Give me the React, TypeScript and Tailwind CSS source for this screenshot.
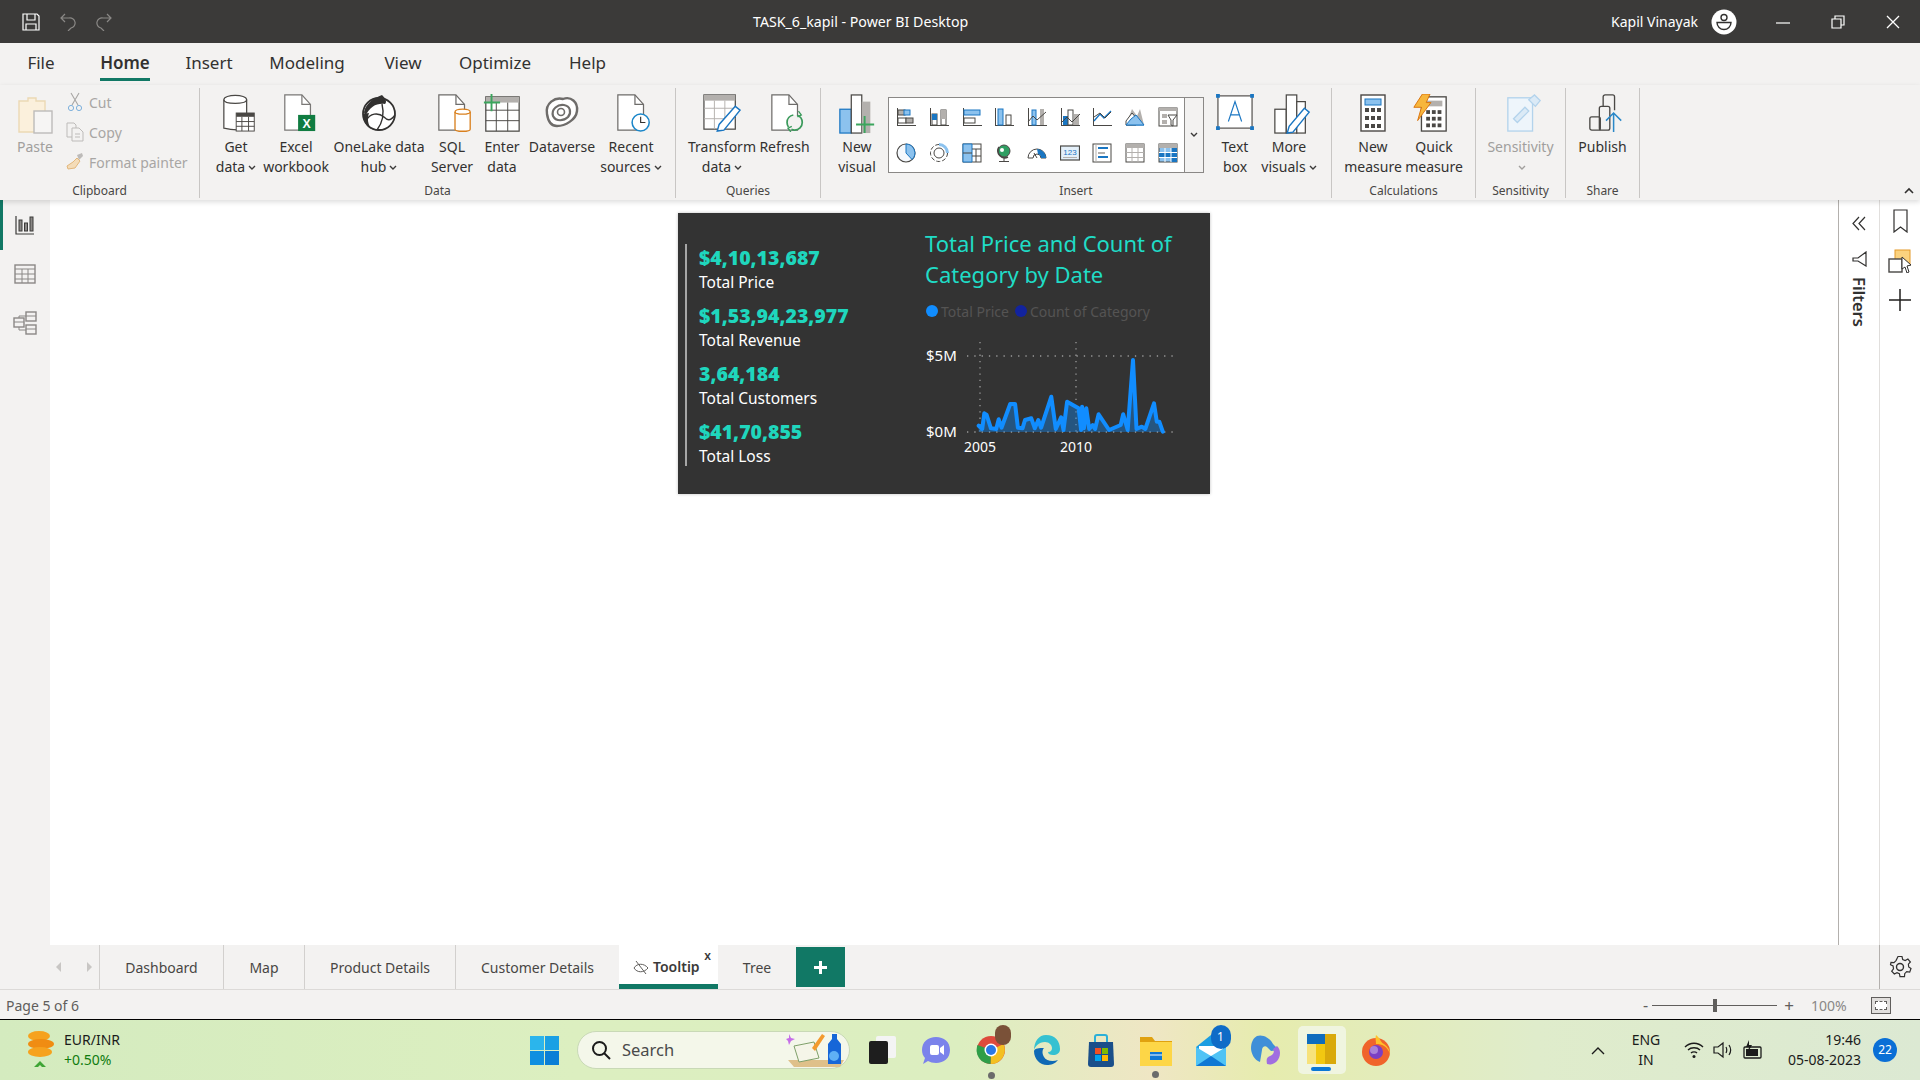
import type { ReactNode } from 'react'

const DK = '#4a4845'
const BL = '#1a76c2'
const LB = '#8cc2ee'
const GR = '#b3b0ad'

function Ico({ w = 20, h = 20, vb, children }: { w?: number; h?: number; vb?: string; children: ReactNode }) {
  return (
    <svg width={w} height={h} viewBox={vb ?? `0 0 ${w} ${h}`} fill="none" className="block shrink-0">
      {children}
    </svg>
  )
}

const gallery: ReactNode[] = [
  <>
    <path d="M1.5 1v17M1 18.5h19" stroke={DK} /><rect x="2" y="3" width="7" height="5" fill={GR} stroke={DK} /><rect x="8" y="3" width="6" height="5" fill={LB} stroke={BL} /><rect x="2" y="11" width="8" height="5" fill="#fff" stroke={DK} /><rect x="10" y="11" width="7" height="5" fill={GR} stroke={DK} />
  </>,
  <>
    <path d="M1.5 1v17M1 18.5h19" stroke={DK} /><rect x="3" y="7" width="5" height="11" fill="#fff" stroke={DK} /><rect x="3" y="7" width="5" height="6" fill={BL} /><rect x="12" y="3" width="5" height="15" fill="#fff" stroke={DK} /><rect x="12" y="3" width="5" height="9" fill={GR} />
  </>,
  <>
    <path d="M1.5 1v18M1 18.5h19" stroke={DK} /><rect x="2" y="3" width="16" height="5" fill={LB} stroke={BL} /><rect x="2" y="11" width="11" height="5" fill="#fff" stroke={DK} />
  </>,
  <>
    <path d="M1.5 1v18M1 18.5h19" stroke={DK} /><rect x="4" y="2" width="5" height="16" fill={LB} stroke={BL} /><rect x="12" y="8" width="5" height="10" fill="#fff" stroke={DK} />
  </>,
  <>
    <path d="M1.5 1v18M1 18.5h19" stroke={DK} /><rect x="5" y="3" width="4" height="15" fill={LB} stroke={BL} /><rect x="13" y="2" width="4" height="16" fill={GR} /><path d="M1 15l5-6 4 4 9-8" stroke={DK} />
  </>,
  <>
    <path d="M1.5 1v18M1 18.5h19" stroke={DK} /><rect x="3" y="9" width="5" height="9" fill={BL} /><rect x="8" y="3" width="5" height="15" fill="#fff" stroke={DK} /><rect x="14" y="7" width="5" height="11" fill={GR} /><path d="M1 16l6-6 5 5 8-8" stroke={DK} />
  </>,
  <>
    <path d="M1.5 1v18M1 18.5h19" stroke={DK} /><path d="M2 14l6-7 4 4 7-7" stroke={BL} strokeWidth="1.4" /><path d="M2 10l6-4 5 5 6-6" stroke={DK} />
  </>,
  <>
    <path d="M1 18h18" stroke={BL} /><path d="M7 2l5 7 3-7 4 16H1z" fill={GR} /><path d="M1 14l6-8 6 7-2 5H1z" fill="#fff" stroke={DK} /><path d="M1 18l5-6 5-4 8 10z" fill={LB} stroke={BL} />
  </>,
  <>
    <rect x="1" y="1" width="18" height="18" fill="#fff" stroke={DK} /><rect x="1" y="1" width="18" height="3" fill={GR} /><rect x="4" y="7" width="5" height="4" fill={GR} /><rect x="4" y="13" width="5" height="4" fill={GR} /><path d="M10 8h9l-4 5v6l-2-1v-5z" fill="#fff" stroke={DK} />
  </>,
  <>
    <circle cx="10" cy="10" r="9" fill="#f5f9fd" stroke={DK} strokeWidth="1.2" /><path d="M10 1a9 9 0 0 1 6 15.5L10 10z" fill={LB} stroke={BL} />
  </>,
  <>
    <circle cx="10" cy="10" r="8.5" stroke={DK} strokeDasharray="4 2" /><circle cx="10" cy="10" r="5" fill="#fff" stroke={DK} /><path d="M10 1.5a8.5 8.5 0 0 1 8.5 8.5" stroke={LB} strokeWidth="3" />
  </>,
  <>
    <rect x="1" y="1" width="18" height="18" fill="#fff" stroke={DK} /><path d="M1 1h9v18H1z" fill={LB} stroke={BL} /><path d="M1 10h9M10 6h9M14 6v13M10 13h9" stroke={DK} />
  </>,
  <>
    <circle cx="10" cy="8" r="6" fill="#2f9e62" stroke={DK} /><path d="M5 4a7 7 0 0 0 9 10" stroke={DK} strokeWidth="1.6" /><path d="M10 15v3M5 18.5h10" stroke={DK} /><circle cx="8" cy="7" r="2" fill="#fff" />
  </>,
  <>
    <path d="M1 15a9 9 0 0 1 18 0h-5a4 4 0 0 0-8 0z" fill="#fff" stroke={DK} /><path d="M10 6a9 9 0 0 1 9 9h-5a4 4 0 0 0-3-4z" fill={BL} /><path d="M7 10l3 5" stroke={DK} />
  </>,
  <>
    <rect x="0.5" y="3" width="19" height="14" fill="#e4f0fa" stroke={DK} strokeWidth="1.2" /><path d="M3 14.5h14" stroke={GR} /><text x="10" y="12" textAnchor="middle" fontSize="8" fill={BL} fontFamily="Liberation Sans, sans-serif">123</text>
  </>,
  <>
    <rect x="1" y="1" width="18" height="18" fill="#fff" stroke={DK} /><path d="M4 1v18" stroke={GR} /><rect x="6" y="4" width="10" height="2" fill={BL} /><rect x="6" y="9" width="7" height="2" fill={GR} /><rect x="6" y="13" width="10" height="2" fill={BL} />
  </>,
  <>
    <rect x="1" y="1" width="18" height="18" fill="#fff" stroke={DK} /><rect x="1" y="1" width="18" height="4" fill={GR} /><path d="M1 9.5h18M1 14.5h18M7 5v14M13 5v14" stroke={GR} />
  </>,
  <>
    <rect x="1" y="1" width="18" height="18" fill={LB} stroke={DK} /><rect x="1" y="1" width="18" height="4" fill={GR} /><rect x="13" y="5" width="6" height="14" fill={BL} /><rect x="1" y="10" width="18" height="4" fill={BL} /><path d="M1 9.5h18M1 14.5h18M7 5v14M13 5v14" stroke="#fff" />
  </>,
]

const chartPts: [number, number][] = [
  [880, 662], [890, 672], [896, 625], [903, 630], [915, 670], [930, 672], [937, 643], [945, 668], [970, 597], [984, 597], [992, 668], [1005, 670], [1012, 645], [1030, 640], [1040, 670], [1050, 645], [1058, 668], [1087, 575], [1100, 672], [1115, 637], [1122, 675], [1132, 590], [1165, 610], [1172, 675], [1175, 605], [1180, 670], [1187, 610], [1195, 672], [1205, 660], [1212, 672], [1222, 628], [1252, 675], [1285, 660], [1292, 628], [1305, 675], [1320, 465], [1330, 672], [1345, 665], [1355, 672], [1380, 595], [1388, 650], [1395, 650], [1405, 680],
]
// zoom coords of the crop to svg coords (svg sits at 925,335 on the page)
const toX = (z: number) => 670 + z / 2.851 - 925
const toY = (z: number) => 205 + z / 3 - 335
const line = chartPts.map(([x, y]) => `${toX(x).toFixed(1)},${toY(y).toFixed(1)}`).join(' ')

function Chevron({ color = '#3b3a39' }: { color?: string }) {
  return (
    <svg width="8" height="6" viewBox="0 0 8 6" fill="none" className="inline-block ml-[3px] mb-[1px]">
      <path d="M1 1l3 3 3-3" stroke={color} strokeWidth="1.4" />
    </svg>
  )
}

function Item({ w, icon, top, bottom, more, muted, shift }: { w: string; icon: ReactNode; top: string; bottom?: string; more?: boolean; muted?: boolean; shift?: string }) {
  return (
    <div className={`${w} flex flex-col items-center shrink-0`}>
      <div className={`h-[49px] pt-[6px] flex items-start justify-center ${shift ?? ''}`}>{icon}</div>
      <div className={`h-[20px] leading-[20px] whitespace-nowrap ${muted ? 'text-[#a19f9d]' : ''}`}>{top}</div>
      <div className="h-[20px] leading-[20px] whitespace-nowrap">
        {bottom}
        {more && <Chevron color={muted ? '#a19f9d' : '#3b3a39'} />}
      </div>
    </div>
  )
}

function Group({ w, label, pl, children }: { w: string; label: string; pl?: string; children: ReactNode }) {
  return (
    <div className={`${w} shrink-0 h-[110px] border-r border-[#c8c6c4] flex flex-col`}>
      <div className={`h-[95px] shrink-0 flex ${pl ?? ''}`}>{children}</div>
      <div className="text-center text-[12px] leading-[15px] text-[#484644]">{label}</div>
    </div>
  )
}

function Tray({ children }: { children: ReactNode }) {
  return <div className="w-[55px] flex justify-center items-center">{children}</div>
}

const menus = [
  { label: 'File', w: 'w-[82px]' },
  { label: 'Home', w: 'w-[86px]', active: true },
  { label: 'Insert', w: 'w-[82px]' },
  { label: 'Modeling', w: 'w-[114px]' },
  { label: 'View', w: 'w-[78px]' },
  { label: 'Optimize', w: 'w-[106px]' },
  { label: 'Help', w: 'w-[79px]' },
]

const tabs = [
  { label: 'Dashboard', w: 'w-[124px]' },
  { label: 'Map', w: 'w-[81px]' },
  { label: 'Product Details', w: 'w-[151px]' },
  { label: 'Customer Details', w: 'w-[164px]' },
]

const kpis = [
  { value: '$4,10,13,687', label: 'Total Price' },
  { value: '$1,53,94,23,977', label: 'Total Revenue' },
  { value: '3,64,184', label: 'Total Customers' },
  { value: '$41,70,855', label: 'Total Loss' },
]

export default function App() {
  return (
    <div className="w-[1920px] h-[1080px] overflow-hidden flex flex-col bg-[#f3f2f1] text-[#323130] text-[14px] font-['Noto_Sans',sans-serif]">
      {/* title bar */}
      <div className="h-[43px] shrink-0 bg-[#3b3a39] flex items-center text-white">
        <div className="w-[753px] shrink-0 flex items-center pl-[22px] gap-[20px]">
          <Ico w={18} h={18}>
            <path d="M1 1h14l2 2v14H1zM5 1v6h8V1M4 17v-6h10v6" stroke="#fff" strokeWidth="1.2" />
          </Ico>
          <Ico w={16} h={18}>
            <path d="M5 1L1 5l4 4M1 5h8a5 5 0 0 1 2 10l-3 3" stroke="#8a8886" strokeWidth="1.2" />
          </Ico>
          <Ico w={16} h={18}>
            <path d="M11 1l4 4-4 4M15 5H7a5 5 0 0 0-2 10l3 3" stroke="#8a8886" strokeWidth="1.2" />
          </Ico>
        </div>
        <div className="text-[14.2px] whitespace-nowrap">TASK_6_kapil - Power BI Desktop</div>
        <div className="ml-auto flex items-center">
          <span className="text-[14px] whitespace-nowrap">Kapil Vinayak</span>
          <div className="ml-[13px] w-[26px] h-[26px]">
            <Ico w={26} h={26}>
              <circle cx="13" cy="13" r="12.5" fill="#fff" />
              <circle cx="13" cy="8.500" r="3" stroke="#323130" strokeWidth="1.4" />
              <path d="M6 13.500h14a7 7 0 0 1-14 0z" stroke="#323130" strokeWidth="1.4" />
            </Ico>
          </div>
          <div className="w-[55px] ml-[18px] flex justify-center">
            <Ico w={14} h={14}><path d="M0 8h14" stroke="#fff" strokeWidth="1.2" /></Ico>
          </div>
          <div className="w-[55px] flex justify-center">
            <Ico w={14} h={14}><path d="M1 4h9v9H1zM4 4V1h9v9h-3" stroke="#fff" strokeWidth="1.2" /></Ico>
          </div>
          <div className="w-[55px] flex justify-center">
            <Ico w={14} h={14}><path d="M1 1l12 12M13 1L1 13" stroke="#fff" strokeWidth="1.3" /></Ico>
          </div>
        </div>
      </div>

      {/* menu tabs */}
      <div className="h-[42px] shrink-0 flex text-[17px]">
        {menus.map((m) => (
          <div key={m.label} className={`${m.w} flex justify-center pt-[8px]`}>
            <span className={`h-[30px] leading-[24px] ${m.active ? 'font-semibold border-b-[3px] border-[#117865]' : ''}`}>{m.label}</span>
          </div>
        ))}
      </div>

      {/* ribbon */}
      <div className="h-[115px] shrink-0 relative z-10 pt-[3px] flex shadow-[0_2px_5px_rgba(0,0,0,0.14)]">
        <Group w="w-[200px]" label="Clipboard">
          <div className="w-[66px] pl-[4px] flex flex-col items-center">
            <div className="pt-[8px] h-[49px]">
              <Ico w={36} h={38}>
                <path d="M2 5h9V2h8v3h9v31H2z" fill="#fbf0dc" stroke="#ecd9b4" strokeWidth="1.4" />
                <rect x="17" y="15" width="18" height="22" fill="#f6f5f4" stroke="#bdbbb9" strokeWidth="1.4" />
              </Ico>
            </div>
            <div className="leading-[20px] text-[#a19f9d]">Paste</div>
          </div>
          <div className="pt-[4px] flex flex-col text-[#a8a6a4] h-[90px] gap-[10px]">
            <div className="flex items-center gap-[5px] h-[20px]">
              <Ico w={18} h={20}>
                <path d="M5 1l7 12M13 1L6 13" stroke="#a8a6a4" strokeWidth="1.1" />
                <circle cx="5" cy="16" r="2.6" stroke="#7eb1dc" /><circle cx="13" cy="16" r="2.6" stroke="#7eb1dc" />
              </Ico>
              Cut
            </div>
            <div className="flex items-center gap-[5px] h-[20px]">
              <Ico w={18} h={20}>
                <path d="M1 1h7l2 2v3M1 1v14h5" stroke="#bdbbb9" /><path d="M6 6h7l4 4v9H6z" stroke="#bdbbb9" /><path d="M9 12h5M9 15h5" stroke="#bdbbb9" />
              </Ico>
              Copy
            </div>
            <div className="flex items-center gap-[5px] h-[20px] whitespace-nowrap">
              <Ico w={18} h={20}>
                <path d="M11 3l5-2 1 3-4 4z" fill="#bdbbb9" /><path d="M11 6l3 3-5 7-7 1-1-3 6-4z" fill="#f4dcb8" stroke="#e2b77c" />
              </Ico>
              Format painter
            </div>
          </div>
        </Group>

        <Group w="w-[476px]" label="Data" pl="pl-[4px]">
          <Item w="w-[64px]" top="Get" bottom="data" more shift="ml-[7px]" icon={
            <Ico w={36} h={38} vb="0 0 36 40">
              <path d="M1 6c0-6 24-6 24 0v29c0 3-12 4-24 1z" fill="#fff" stroke={DK} strokeWidth="1.3" />
              <path d="M1 6c0 5 24 5 24 0" stroke={DK} strokeWidth="1.3" />
              <rect x="14" y="20" width="19" height="19" fill="#fff" stroke={DK} /><rect x="14" y="20" width="19" height="4" fill={DK} /><path d="M14 29h19M14 34h19M20 24v15M27 24v15" stroke={DK} />
            </Ico>} />
          <Item w="w-[56px]" top="Excel" bottom="workbook" shift="ml-[8px]" icon={
            <Ico w={34} h={38} vb="0 0 34 40">
              <path d="M1 1h18l9 10v27H1z" fill="#fff" stroke="#7a7876" strokeWidth="1.3" /><path d="M19 1v10h9" stroke="#7a7876" strokeWidth="1.3" />
              <rect x="15" y="22" width="18" height="17" fill="#107c41" />
              <text x="24" y="36" textAnchor="middle" fontSize="13" fontWeight="700" fill="#fff" fontFamily="Liberation Sans, sans-serif">X</text>
            </Ico>} />
          <Item w="w-[110px]" top="OneLake data" bottom="hub" more icon={
            <Ico w={36} h={38}>
              <circle cx="18" cy="20" r="16" fill="#fff" stroke="#323130" strokeWidth="1.8" />
              <path d="M3 18C5 9 13 4 21 1c4 4 5 7 3 9-8-1-15 2-20 13z" fill="#323130" />
              <path d="M5 27c4-8 12-9 18-4 3 3 6 5 11-2M21 10c2 8 1 18-5 26" stroke="#323130" strokeWidth="1.4" />
              <path d="M2 20c0 7 4 13 8 15-3-5-4-10-2-16z" fill="#323130" />
            </Ico>} />
          <Item w="w-[36px]" top="SQL" bottom="Server" shift="ml-[6px]" icon={
            <Ico w={36} h={38} vb="0 0 36 40">
              <path d="M1 1h18l9 10v27H1z" fill="#fff" stroke="#6e6c6a" strokeWidth="1.3" /><path d="M19 1v10h9" stroke="#6e6c6a" strokeWidth="1.3" />
              <path d="M18 19c0-4 16-4 16 0v18c0 3-16 3-16 0z" fill="#fff" stroke="#d9801f" strokeWidth="1.4" /><path d="M18 19c0 3 16 3 16 0" stroke="#d9801f" strokeWidth="1.4" />
            </Ico>} />
          <Item w="w-[64px]" top="Enter" bottom="data" icon={
            <Ico w={38} h={40} vb="0 0 38 42">
              <rect x="2" y="3" width="35" height="36" fill="#fff" stroke={DK} strokeWidth="1.3" /><rect x="2" y="3" width="35" height="6" fill={GR} />
              <path d="M2 17h35M2 28h35M13 9v30M25 9v30" stroke={DK} />
              <path d="M8 0v18M0 9h17" stroke="#3ba55d" strokeWidth="2" />
            </Ico>} />
          <Item w="w-[56px]" top="Dataverse" icon={
            <Ico w={36} h={36}>
              <path d="M3 20C1 9 11 3 19 5c8-3 15 3 14 12-1 9-12 15-20 15C7 32 4 27 3 20z" fill="#fff" stroke="#6e6c6a" strokeWidth="2.4" />
              <path d="M9 22c-2-7 5-12 11-11 6 1 8 7 4 12-4 4-12 5-15-1z" stroke="#6e6c6a" strokeWidth="2.2" />
              <circle cx="17" cy="18" r="3.5" stroke="#6e6c6a" strokeWidth="1.6" />
            </Ico>} />
          <Item w="w-[82px]" top="Recent" bottom="sources" more shift="ml-[6px]" icon={
            <Ico w={36} h={38} vb="0 0 36 40">
              <path d="M1 1h18l9 10v27H1z" fill="#fff" stroke="#6e6c6a" strokeWidth="1.3" /><path d="M19 1v10h9" stroke="#6e6c6a" strokeWidth="1.3" />
              <circle cx="25" cy="30" r="9" fill="#fff" stroke="#1a86c9" strokeWidth="1.6" /><path d="M25 24v6h5" stroke="#323130" strokeWidth="1.2" />
            </Ico>} />
        </Group>

        <Group w="w-[145px]" label="Queries" pl="pl-[16px]">
          <Item w="w-[60px]" top="Transform" bottom="data" more icon={
            <Ico w={40} h={38} vb="0 0 40 40">
              <rect x="1" y="1" width="33" height="36" fill="#fff" stroke={DK} strokeWidth="1.3" /><rect x="1" y="1" width="33" height="6" fill={GR} />
              <path d="M1 15h33M1 26h33M12 7v30M23 7v30" stroke={GR} />
              <path d="M34 13l5 4-17 21-7 1 2-7z" fill="#fff" stroke="#1a76c2" strokeWidth="1.5" />
            </Ico>} />
          <Item w="w-[65px]" top="Refresh" shift="ml-[6px]" icon={
            <Ico w={36} h={38} vb="0 0 36 40">
              <path d="M1 1h18l9 10v27H1z" fill="#fff" stroke="#6e6c6a" strokeWidth="1.3" /><path d="M19 1v10h9" stroke="#6e6c6a" strokeWidth="1.3" />
              <circle cx="25" cy="30" r="8" fill="#f3f2f1" stroke="#3a9a5b" strokeWidth="1.8" strokeDasharray="16 4" /><path d="M29 18l3 4-4 2M21 40l-3-4 4-2" stroke="#3a9a5b" strokeWidth="1.4" />
            </Ico>} />
        </Group>

        <Group w="w-[511px]" label="Insert" pl="pl-[14px]">
          <Item w="w-[44px]" top="New" bottom="visual" icon={
            <Ico w={38} h={40} vb="0 0 38 42">
              <rect x="1" y="16" width="12" height="25" fill={LB} stroke={BL} strokeWidth="1.3" /><rect x="13" y="1" width="11" height="40" fill="#fff" stroke={DK} strokeWidth="1.3" /><rect x="24" y="8" width="9" height="33" fill={GR} />
              <path d="M27 23v18M18 32h19" stroke="#3ba55d" strokeWidth="2" />
            </Ico>} />
          <div className="ml-[9px] mt-[9px] w-[316px] h-[76px] shrink-0 flex border border-[#8a8886] bg-white">
            <div className="w-[295px] grid grid-cols-9 content-center gap-y-[16px] pl-[1px]">
              {gallery.map((g, i) => (
                <div key={i} className="flex justify-center"><Ico>{g}</Ico></div>
              ))}
            </div>
            <div className="flex-1 bg-[#f3f2f1] border-l border-[#8a8886] flex items-center justify-center pr-[3px]">
              <Chevron />
            </div>
          </div>
          <div className="ml-[5px]" />
          <Item w="w-[52px]" top="Text" bottom="box" icon={
            <Ico w={40} h={36} vb="0 0 40 38">
              <rect x="2" y="2" width="36" height="34" fill="#fff" stroke={DK} strokeWidth="1.2" />
              <rect x="0" y="0" width="4" height="4" fill={BL} /><rect x="36" y="0" width="4" height="4" fill={BL} /><rect x="0" y="34" width="4" height="4" fill={BL} /><rect x="36" y="34" width="4" height="4" fill={BL} />
              <path d="M13 29l7-21 7 21M15 22h10" stroke={BL} strokeWidth="1.2" />
            </Ico>} />
          <Item w="w-[56px]" top="More" bottom="visuals" more shift="ml-[6px]" icon={
            <Ico w={38} h={40} vb="0 0 38 42">
              <rect x="1" y="16" width="12" height="25" fill="#fff" stroke={DK} strokeWidth="1.3" /><rect x="13" y="1" width="11" height="40" fill="#fff" stroke={DK} strokeWidth="1.3" /><rect x="24" y="8" width="9" height="33" fill="#fff" stroke={DK} strokeWidth="1.3" />
              <path d="M32 15l5 4-17 21-6 1 2-7z" fill="#fff" stroke={BL} strokeWidth="1.5" />
            </Ico>} />
        </Group>

        <Group w="w-[144px]" label="Calculations" pl="pl-[11px]">
          <Item w="w-[60px]" top="New" bottom="measure" icon={
            <Ico w={26} h={38}>
              <rect x="1" y="1" width="24" height="36" fill="#fff" stroke={DK} strokeWidth="1.4" /><rect x="5" y="5" width="16" height="6" fill={LB} stroke={BL} />
              {[14, 22, 30].map((y) => [5, 11, 17].map((x) => <rect key={`${x}${y}`} x={x} y={y} width="4" height="4" fill={DK} />))}
            </Ico>} />
          <Item w="w-[62px]" top="Quick" bottom="measure" shift="mr-[8px]" icon={
            <Ico w={36} h={38} vb="0 0 36 40">
              <rect x="9" y="3" width="26" height="36" fill="#fff" stroke={DK} strokeWidth="1.4" /><rect x="14" y="7" width="17" height="6" fill={GR} />
              {[17, 24, 31].map((y) => [14, 20, 26].map((x) => <rect key={`${x}${y}`} x={x} y={y} width="4" height="4" fill={DK} />))}
              <path d="M10 0h8l-4 9h5L5 28l4-14H1z" fill="#f7b63c" stroke="#d9730d" />
            </Ico>} />
        </Group>

        <Group w="w-[90px]" label="Sensitivity">
          <div className="w-full"><Item w="w-full" top="Sensitivity" muted more shift="ml-[6px]" icon={
            <Ico w={36} h={38} vb="0 0 36 40">
              <rect x="1" y="4" width="26" height="35" fill="#eef5fb" stroke="#b3d3ec" strokeWidth="1.4" />
              <path d="M7 26l12-12 4 4-12 12zM23 6l6-5 6 6-5 6z" fill="#dbeaf6" stroke="#b3d3ec" strokeWidth="1.4" />
            </Ico>} /></div>
        </Group>

        <Group w="w-[74px]" label="Share">
          <div className="w-full"><Item w="w-full" top="Publish" shift="ml-[6px]" icon={
            <Ico w={36} h={38} vb="0 0 36 40">
              <rect x="1" y="24" width="11" height="14" rx="2" stroke={DK} strokeWidth="1.4" /><rect x="11" y="13" width="11" height="25" rx="2" stroke={DK} strokeWidth="1.4" /><path d="M15 13V3a2 2 0 0 1 2-2h8a2 2 0 0 1 2 2v14" stroke={DK} strokeWidth="1.4" />
              <path d="M26 40V21M18 28l8-8 8 8" stroke="#2b88c8" strokeWidth="1.6" />
            </Ico>} /></div>
        </Group>

        <div className="flex-1 flex justify-end items-end pr-[6px] pb-[6px]">
          <svg width="10" height="7" viewBox="0 0 10 7" fill="none"><path d="M1 6l4-4 4 4" stroke="#323130" strokeWidth="1.6" /></svg>
        </div>
      </div>

      {/* work area */}
      <div className="flex-1 min-h-0 flex">
        <div className="w-[50px] shrink-0 flex flex-col">
          <div className="h-[50px] border-l-[3px] border-[#117865] flex items-center justify-center pr-[3px]">
            <Ico w={20} h={20}>
              <path d="M1 1v18h18" stroke="#3b3a39" strokeWidth="1.2" />
              <rect x="4" y="5" width="3" height="11" fill="#8a8886" stroke="#3b3a39" /><rect x="9.5" y="8" width="3" height="8" fill="#8a8886" stroke="#3b3a39" /><rect x="15" y="2" width="3" height="14" fill="#8a8886" stroke="#3b3a39" />
            </Ico>
          </div>
          <div className="h-[48px] flex items-center justify-center">
            <Ico w={22} h={20}>
              <rect x="1" y="1" width="20" height="18" stroke="#8a8886" strokeWidth="1.4" /><path d="M1 5h20M1 10h20M1 15h20M8 5v14M14 5v14" stroke="#8a8886" />
            </Ico>
          </div>
          <div className="h-[50px] flex items-center justify-center">
            <Ico w={24} h={24}>
              <rect x="13" y="1" width="10" height="9" stroke="#8a8886" strokeWidth="1.4" /><rect x="1" y="7" width="10" height="9" stroke="#8a8886" strokeWidth="1.4" /><rect x="13" y="14" width="10" height="9" stroke="#8a8886" strokeWidth="1.4" />
              <path d="M13 5H6v2M6 16v3h7M1 11h10M13 5h10M13 18h10" stroke="#8a8886" />
            </Ico>
          </div>
        </div>

        <div className="flex-1 min-w-0 bg-white pl-[628px] pt-[13px]">
          <div className="w-[532px] h-[281px] bg-[#333333] flex shadow-[0_0_3px_rgba(0,0,0,0.25)]">
            <div className="w-[247px] shrink-0 pl-[7px] pt-[31px]">
              <div className="h-[222px] border-l-2 border-[#a6a6a6] pl-[12px] pt-[1px] flex flex-col gap-[10px]">
                {kpis.map((k) => (
                  <div key={k.label}>
                    <div className="h-[26px] text-[19.500px] leading-[26px] font-black text-[#1fd6bd] whitespace-nowrap">{k.value}</div>
                    <div className="h-[22px] text-[15.500px] leading-[22px] text-white whitespace-nowrap">{k.label}</div>
                  </div>
                ))}
              </div>
            </div>
            <div className="flex-1 pt-[15px]">
              <div className="text-[22px] leading-[31px] text-[#20dcc6] whitespace-nowrap">
                Total Price and Count of
                <br />
                Category by Date
              </div>
              <div className="mt-[11px] h-[20px] flex items-center text-[14px] text-[#555453] whitespace-nowrap">
                <span className="ml-[1px] w-[12px] h-[12px] rounded-full bg-[#118dff]" />
                <span className="ml-[3px] w-[74px]">Total Price</span>
                <span className="w-[12px] h-[12px] rounded-full bg-[#12239e]" />
                <span className="ml-[3px]">Count of Category</span>
              </div>
              <svg width="280" height="125" viewBox="0 0 280 125" fill="none" className="block mt-[14px]">
                <path d="M42 21h208M42 97h208" stroke="#9a9a9a" strokeWidth="1.3" strokeDasharray="1.3 6" />
                <path d="M55 7v90M151 7v90" stroke="#9a9a9a" strokeWidth="1.3" strokeDasharray="1.3 5" />
                <polygon points={`${toX(880).toFixed(1)},97 ${line} ${toX(1405).toFixed(1)},97`} fill="#118dff" fillOpacity="0.38" />
                <polyline points={line} stroke="#118dff" strokeWidth="4" strokeLinejoin="round" strokeLinecap="round" />
                <g fill="#fff" fontSize="15" fontFamily="Noto Sans, sans-serif">
                  <text x="1" y="26">$5M</text>
                  <text x="1" y="102">$0M</text>
                </g>
                <g fill="#fff" fontSize="14" fontFamily="Noto Sans, sans-serif">
                  <text x="55" y="117" textAnchor="middle">2005</text>
                  <text x="151" y="117" textAnchor="middle">2010</text>
                </g>
              </svg>
            </div>
          </div>
        </div>

        <div className="w-[41px] shrink-0 bg-white border-l border-[#b3b0ad] flex flex-col items-center pt-[16px]">
          <Ico w={15} h={15}><path d="M7 1L1 7.5 7 14M13 1L7 7.5 13 14" stroke="#323130" strokeWidth="1.2" /></Ico>
          <div className="mt-[20px]">
            <Ico w={15} h={16}><path d="M14 1v14L6 10H1V7h5z" stroke="#323130" strokeWidth="1.2" /></Ico>
          </div>
          <div className="mt-[10px] text-[16.500px] font-semibold leading-[20px] [writing-mode:vertical-rl]">Filters</div>
        </div>
        <div className="w-[41px] shrink-0 bg-white border-l border-[#e1dfdd] flex flex-col items-center pt-[9px]">
          <Ico w={15} h={24}><path d="M1 1h13v22l-6.500-5L1 23z" stroke="#323130" strokeWidth="1.2" /></Ico>
          <div className="mt-[16px]">
            <Ico w={24} h={24}>
              <rect x="7" y="1" width="15" height="15" fill="#fbd27e" stroke="#e39a2b" />
              <rect x="1" y="10" width="13" height="13" fill="#fff" stroke="#484644" strokeWidth="1.4" />
              <path d="M14 8l9 8-4 1 2 6-2 1-2-6-3 2z" fill="#fff" stroke="#323130" />
            </Ico>
          </div>
          <div className="mt-[15px]">
            <Ico w={24} h={24}><path d="M12 1v22M1 12h22" stroke="#201f1e" strokeWidth="1.5" /></Ico>
          </div>
        </div>
      </div>

      {/* page tabs */}
      <div className="h-[45px] shrink-0 flex border-b border-[#dcdad8] text-[#3b3a39]">
        <div className="w-[99px] shrink-0 pl-[55px] flex items-center gap-[24px]">
          <svg width="7" height="12" viewBox="0 0 7 12"><path d="M6 1v10L1 6z" fill="#c8c6c4" /></svg>
          <svg width="7" height="12" viewBox="0 0 7 12"><path d="M1 1v10l5-5z" fill="#c8c6c4" /></svg>
        </div>
        {tabs.map((t) => (
          <div key={t.label} className={`${t.w} shrink-0 border-l border-[#d2d0ce] first:border-[#a19f9d] flex items-center justify-center whitespace-nowrap text-[#484644]`}>
            {t.label}
          </div>
        ))}
        <div className="relative w-[99px] shrink-0 bg-white border-b-[5px] border-[#117865] flex items-center pl-[14px] gap-[4px] font-semibold">
          <div className="mt-[5px]">
            <Ico w={16} h={14}>
              <path d="M1 8c3-5 10-5 14 0-4 5-11 5-14 0z" stroke="#605e5c" /><path d="M3 1l10 13" stroke="#605e5c" />
            </Ico>
          </div>
          <span className="mt-[3px]">Tooltip</span>
          <span className="absolute right-[7px] top-[4px] text-[12px] leading-[14px]">x</span>
        </div>
        <div className="w-[78px] shrink-0 bg-[#f3f2f1] flex items-center justify-center text-[#484644]">Tree</div>
        <div className="w-[49px] h-[40px] mt-[2px] shrink-0 bg-[#117865] flex items-center justify-center">
          <Ico w={13} h={13}><path d="M6.500 0v13M0 6.500h13" stroke="#fff" strokeWidth="3" /></Ico>
        </div>
        <div className="ml-auto w-[41px] border-l border-[#b3b0ad] flex items-center justify-center">
          <Ico w={24} h={24}>
            <circle cx="12" cy="12" r="3.5" stroke="#323130" strokeWidth="1.4" />
            <path d="M10 1.500h4l.7 3 2.500 1 2.700-1.500 2.500 3-2 2.200.3 2.800 2.300 1.500-1.300 3.600-3-.4-2 2-.2 3h-4.500l-.6-3-2.400-1.100-2.700 1.400-2.600-2.800 1.800-2.400-.4-2.800-2.600-1.300L3 7.300l3 .3 2-2z" stroke="#323130" strokeWidth="1.2" />
          </Ico>
        </div>
      </div>

      {/* status bar */}
      <div className="h-[29px] shrink-0 pt-[1px] flex items-center text-[14px] text-[#605e5c]">
        <span className="pl-[6px]">Page 5 of 6</span>
        <div className="ml-auto flex items-center">
          <span className="text-[16px]">-</span>
          <div className="ml-[4px] w-[125px] h-[1px] bg-[#605e5c] relative">
            <span className="absolute left-[61px] top-[-6px] w-[4px] h-[13px] bg-[#605e5c]" />
          </div>
          <span className="ml-[7px] text-[17px] leading-none">+</span>
          <span className="ml-[17px] w-[44px] text-[#8a8886]">100%</span>
          <div className="ml-[16px] mr-[29px] w-[20px] h-[17px] border border-[#605e5c] bg-[#e1dfdd] flex items-center justify-center">
            <div className="w-[12px] h-[9px] border border-dashed border-[#605e5c] bg-white" />
          </div>
        </div>
      </div>

      {/* windows taskbar */}
      <div className="h-[61px] shrink-0 border-t border-black bg-[linear-gradient(90deg,#d4ebbf_0%,#dcefc0_30%,#dceec0_50%,#efe6c4_60%,#e6ecae_66%,#dfeccb_80%,#dce9d3_100%)] flex items-center text-[#1b1b1b]">
        <div className="w-[530px] shrink-0 pl-[26px] flex items-center gap-[9px]">
          <Ico w={29} h={38}>
            <ellipse cx="13" cy="5" rx="11" ry="5" fill="#f6a21e" /><ellipse cx="15" cy="13" rx="13" ry="5" fill="#f08c12" /><ellipse cx="14" cy="21" rx="12" ry="5" fill="#f6a21e" />
            <path d="M8 36l6-6 6 6h-4l-2-2-2 2z" fill="#3fa535" />
          </Ico>
          <div className="text-[14px] leading-[20px]">
            <div>EUR/INR</div>
            <div className="text-[#107c10]">+0.50%</div>
          </div>
        </div>
        <Ico w={29} h={29}>
          <rect x="0" y="0" width="14" height="14" fill="#2bb5ec" /><rect x="15" y="0" width="14" height="14" fill="#1aa0e4" /><rect x="0" y="15" width="14" height="14" fill="#0f8fe0" /><rect x="15" y="15" width="14" height="14" fill="#0a7fd6" />
        </Ico>
        <div className="ml-[18px] w-[273px] h-[38px] shrink-0 rounded-full bg-[#f4f7ea] border border-[#c9d9b7] flex items-center pl-[13px] text-[16.500px] text-[#4a4a4a]">
          <Ico w={20} h={20}><circle cx="8.500" cy="8.500" r="6.500" stroke="#1b1b1b" strokeWidth="2" /><path d="M13 13l6 6" stroke="#1b1b1b" strokeWidth="2" /></Ico>
          <span className="ml-[11px]">Search</span>
          <div className="ml-auto mr-[3px]">
            <Ico w={60} h={36}>
              <path d="M2 28h56l-4 7H8z" fill="#dfc08a" />
              <path d="M8 14l20-4 5 16-20 4z" fill="#f5f5e8" stroke="#7fa06a" />
              <path d="M26 16L36 2l3 2-10 15z" fill="#f39a2e" />
              <path d="M46 2h5v5l4 5v20H42V12l4-5z" fill="#1666d8" /><circle cx="48" cy="24" r="5" fill="#5fb0f5" />
              <path d="M3 2l2 4 4 1-4 2-2 4-1-4-2-2 3-1z" fill="#c56ee8" />
            </Ico>
          </div>
        </div>
        <div className="ml-[3px] flex">
          <Tray><div className="ml-[4px]"><Ico w={30} h={30}><rect x="8" y="1" width="20" height="22" rx="2" fill="#f4f4f4" /><rect x="1" y="6" width="19" height="23" rx="2" fill="#1e1e1e" /></Ico></div></Tray>
          <Tray><Ico w={30} h={30}><path d="M15 2c8 0 14 5 14 13s-6 13-14 13c-3 0-6-1-8-2l-5 3 2-6c-2-2-3-5-3-8C1 7 7 2 15 2z" fill="#7b83eb" /><rect x="9" y="10" width="9" height="10" rx="2" fill="#fff" /><path d="M19 13l4-3v10l-4-3z" fill="#fff" /></Ico></Tray>
          <Tray>
            <div className="relative">
              <Ico w={30} h={30}>
                <circle cx="15" cy="15" r="14" fill="#de4a3c" /><path d="M15 15l12.500-6a14 14 0 0 1-13 20z" fill="#f3c021" /><path d="M15 15L1.500 10a14 14 0 0 0 13 19z" fill="#2f9e48" /><circle cx="15" cy="15" r="6.500" fill="#fff" /><circle cx="15" cy="15" r="5" fill="#2a78e4" />
              </Ico>
              <span className="absolute right-[-5px] top-[-10px] w-[16px] h-[20px] rounded-full bg-[#7a5138]" />
              <span className="absolute left-[12px] bottom-[-14px] w-[7px] h-[7px] rounded-full bg-[#6b6b6b]" />
            </div>
          </Tray>
          <Tray><Ico w={30} h={32}><path d="M15 1c9 0 14 6 14 14 0 4-3 6-7 6-3 0-5-1-5-3 3 0 4-2 4-4 0-3-3-6-7-6-6 0-11 5-11 9C3 7 8 1 15 1z" fill="#35c1d1" /><path d="M3 17c0 8 6 14 13 14 4 0 8-1 11-5-5 2-12 1-14-3-2-3-2-7 0-9-5 0-9 0-10 3z" fill="#0f69b5" /></Ico></Tray>
          <Tray><Ico w={30} h={34}><path d="M3 9h24l1 22a3 3 0 0 1-3 3H5a3 3 0 0 1-3-3z" fill="#1a4f8a" /><path d="M9 9V4a2 2 0 0 1 2-2h8a2 2 0 0 1 2 2v5" stroke="#2bb0d8" strokeWidth="2" /><rect x="9" y="15" width="6" height="6" fill="#f25022" /><rect x="16" y="15" width="6" height="6" fill="#7fba00" /><rect x="9" y="22" width="6" height="6" fill="#00a4ef" /><rect x="16" y="22" width="6" height="6" fill="#ffb900" /></Ico></Tray>
          <Tray>
            <div className="relative">
              <Ico w={32} h={32}><path d="M0 3h12l3 4h17v25H0z" fill="#e0a10f" /><rect x="0" y="8" width="32" height="24" fill="#fdd647" /><rect x="10" y="18" width="12" height="8" fill="#0f78d4" /><path d="M10 21h12" stroke="#fff" /></Ico>
              <span className="absolute left-[12px] bottom-[-12px] w-[7px] h-[7px] rounded-full bg-[#6b6b6b]" />
            </div>
          </Tray>
          <Tray>
            <div className="relative">
              <Ico w={30} h={32}><path d="M0 13L15 1l15 12v19H0z" fill="#1b9de2" /><path d="M3 12h24v10l-12 7-12-7z" fill="#fff" /><path d="M0 13l15 9 15-9v19H0z" fill="#50c3f5" /><path d="M0 32l15-10 15 10z" fill="#0f78d4" /></Ico>
              <span className="absolute right-[-5px] top-[-9px] w-[20px] h-[24px] rounded-full bg-[#0f6cc7] text-white text-[12px] leading-[24px] text-center">1</span>
            </div>
          </Tray>
          <Tray><Ico w={30} h={32}><path d="M6 2c6-2 13 2 16 8l6 6-8 1-4-4c-2-2-5 0-5 3l-2 12c-6-2-9-9-9-14S2 4 6 2z" fill="#3f8fd8" /><path d="M16 30c6 2 13-3 13-11 0-3-1-5-3-7l-4 3c2 3 0 6-3 7-3 1-4 3-3 8z" fill="#a06ee0" /></Ico></Tray>
          <div className="w-[55px] flex justify-center relative">
            <div className="w-[46px] h-[48px] rounded-[5px] bg-[#f0f5e0] flex flex-col items-center pt-[8px] shadow-[2px_0_0_#f0f5e0]">
              <Ico w={30} h={30}>
                <rect x="1" y="10" width="12" height="20" fill="#f7e27a" /><rect x="10" y="5" width="11" height="25" fill="#f2c811" /><rect x="19" y="0" width="11" height="30" fill="#d9a90b" /><rect x="1" y="0" width="18" height="10" fill="#0f6cbd" />
              </Ico>
              <span className="mt-[3px] w-[20px] h-[4px] rounded-full bg-[#0a78d7]" />
            </div>
          </div>
          <Tray><Ico w={30} h={32}><circle cx="15" cy="18" r="14" fill="#f0642b" /><path d="M15 1c5 4 4 7 8 9 4 3 6 6 6 10-3-8-8-10-14-10 0-3-1-6 0-9z" fill="#ffc028" /><circle cx="15" cy="18" r="7" fill="#7b3fc4" /><circle cx="13" cy="16" r="4" fill="#fff" opacity="0.35" /></Ico></Tray>
        </div>
        <div className="ml-[182px] flex items-center">
          <div className="w-[26px] flex justify-center"><Ico w={14} h={9}><path d="M1 8l6-6 6 6" stroke="#1b1b1b" strokeWidth="1.4" /></Ico></div>
          <div className="w-[70px] text-center text-[14px] leading-[20px]"><div>ENG</div><div>IN</div></div>
          <div className="w-[26px] flex justify-center">
            <Ico w={20} h={18}><path d="M1 6c5-5 13-5 18 0M4 9c3-3 9-3 12 0M7 12c1.500-1.500 4.500-1.500 6 0" stroke="#1b1b1b" strokeWidth="1.4" /><circle cx="10" cy="15.500" r="1.500" fill="#1b1b1b" /></Ico>
          </div>
          <div className="w-[32px] flex justify-center">
            <Ico w={20} h={18}><path d="M1 6h4l5-4v14l-5-4H1z" stroke="#1b1b1b" strokeWidth="1.2" /><path d="M13 6c1 2 1 4 0 6M16 4c2 3 2 7 0 10" stroke="#1b1b1b" strokeWidth="1.2" /></Ico>
          </div>
          <div className="w-[28px] flex justify-center">
            <Ico w={20} h={20}><rect x="1" y="7" width="17" height="11" rx="1" stroke="#1b1b1b" strokeWidth="1.3" /><rect x="3" y="9" width="12" height="7" fill="#1b1b1b" /><path d="M6 0L3 7h3l-1 5 4-7H6z" fill="#1b1b1b" /></Ico>
          </div>
          <div className="w-[96px] pr-[2px] text-right text-[14px] leading-[20px]"><div>19:46</div><div className="whitespace-nowrap">05-08-2023</div></div>
          <div className="ml-[10px] w-[24px] h-[24px] rounded-full bg-[#0a6fd6] text-white text-[12px] leading-[24px] text-center">22</div>
        </div>
      </div>
    </div>
  )
}
